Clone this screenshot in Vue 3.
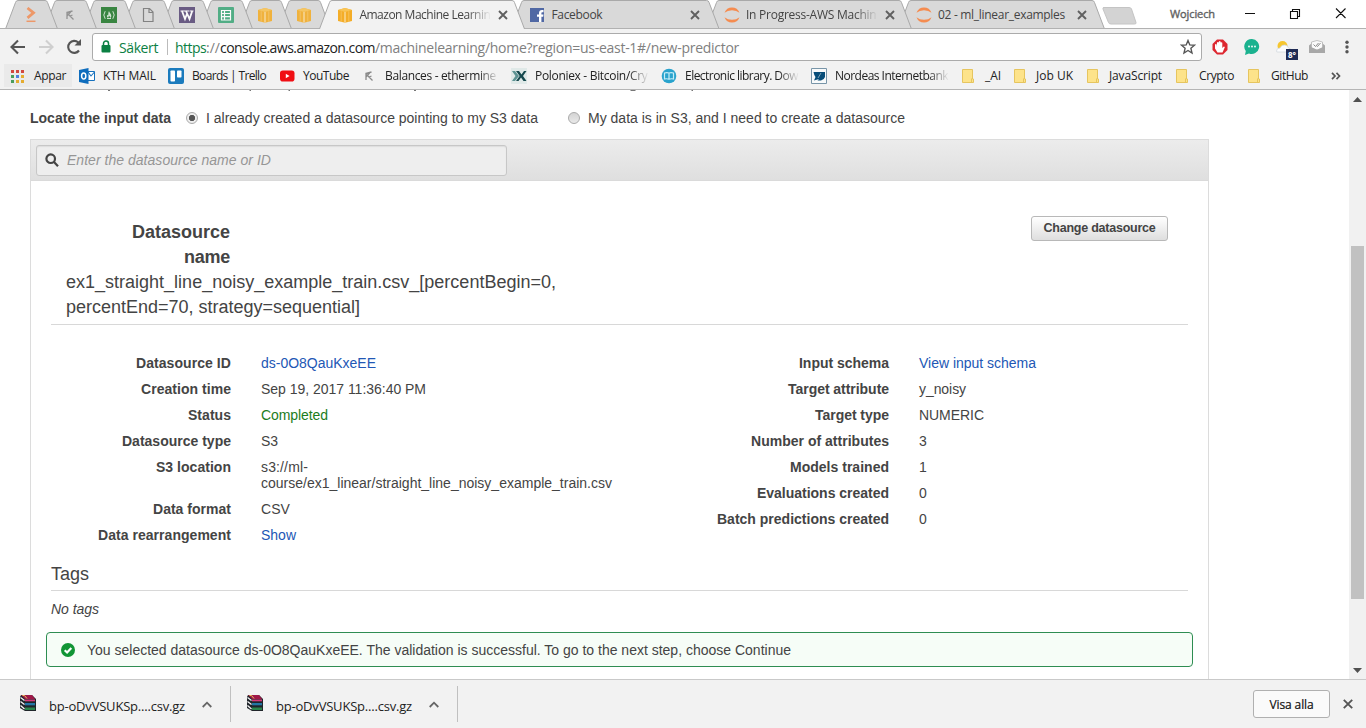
<script setup>
const iconTabs = ['stack', 'miner', 'camp', 'page', 'wiki', 'sheet', 'cube', 'cube']
const wideTabs = [
  { icon: 'cube', text: 'Amazon Machine Learnin', fit: 131, basis: 192, active: true },
  { icon: 'facebook', text: 'Facebook', fit: 51, basis: 194.6 },
  { icon: 'jupyter', text: 'In Progress-AWS Machin', fit: 130.5, basis: 192 },
  { icon: 'jupyter', text: '02 - ml_linear_examples', fit: 127, basis: 193 },
]
const tabs = [
  ...iconTabs.map((icon) => ({ icon, basis: 39.05, dim: true })),
  ...wideTabs,
].map((t, i) => ({ ...t, z: t.active ? 30 : 20 - i, w: t.basis + 14 }))

const tabPath = (w) => `M0.5 29 L10.5 2.5 Q11 0.5 13 0.5 H${w - 13} Q${w - 11} 0.5 ${w - 10.5} 2.5 L${w - 0.5} 29`

const bookmarks = [
  { icon: 'apps', text: 'Appar', fit: 32, w: 69, gap: 8, apps: true },
  { icon: 'outlook', text: 'KTH MAIL', fit: 53, w: 89, gap: 8 },
  { icon: 'trello', text: 'Boards | Trello', fit: 74, w: 111, gap: 8 },
  { icon: 'youtube', text: 'YouTube', fit: 46, w: 82, gap: 8 },
  { icon: 'miner', text: 'Balances - ethermine', fit: 111, w: 150, gap: 8, fade: true },
  { icon: 'poloniex', text: 'Poloniex - Bitcoin/Cry', fit: 112.5, w: 150, gap: 8, fade: true },
  { icon: 'library', text: 'Electronic library. Dow', fit: 113, w: 150, gap: 8, fade: true },
  { icon: 'nordea', text: 'Nordeas Internetbank', fit: 113, w: 149, gap: 8, fade: true },
  { icon: 'folder', text: '_AI', fit: 16, w: 52, gap: 9 },
  { icon: 'folder', text: 'Job UK', fit: 37, w: 73, gap: 8 },
  { icon: 'folder', text: 'JavaScript', fit: 53, w: 89, gap: 8 },
  { icon: 'folder', text: 'Crypto', fit: 35, w: 72, gap: 9 },
  { icon: 'folder', text: 'GitHub', fit: 37, w: 71, gap: 9 },
]

const leftRows = [
  { label: 'Datasource ID', value: ['ds-0O8QauKxeEE'], fit: [115], lf: 95, kind: 'link' },
  { label: 'Creation time', value: ['Sep 19, 2017 11:36:40 PM'], fit: [165], lf: 90 },
  { label: 'Status', value: ['Completed'], fit: [67], lf: 43, kind: 'ok' },
  { label: 'Datasource type', value: ['S3'], fit: [17], lf: 109 },
  { label: 'S3 location', value: ['s3://ml-', 'course/ex1_linear/straight_line_noisy_example_train.csv'], fit: [47, 351], lf: 75 },
  { label: 'Data format', value: ['CSV'], fit: [29], lf: 78 },
  { label: 'Data rearrangement', value: ['Show'], fit: [35], lf: 133, kind: 'link' },
]
const rightRows = [
  { label: 'Input schema', value: ['View input schema'], fit: [117], lf: 90, kind: 'link' },
  { label: 'Target attribute', value: ['y_noisy'], fit: [47], lf: 101 },
  { label: 'Target type', value: ['NUMERIC'], fit: [65], lf: 74 },
  { label: 'Number of attributes', value: ['3'], fit: [8], lf: 138 },
  { label: 'Models trained', value: ['1'], fit: [8], lf: 99 },
  { label: 'Evaluations created', value: ['0'], fit: [8], lf: 132 },
  { label: 'Batch predictions created', value: ['0'], fit: [8], lf: 172 },
]
const columns = [leftRows, rightRows]
const downloads = ['bp-oDvVSUKSp....csv.gz', 'bp-oDvVSUKSp....csv.gz']

/* Tightens or loosens tracking so a label takes exactly the given width. */
const vFit = {
  mounted(el, { value }) {
    const n = el.textContent.length
    const w = el.getBoundingClientRect().width
    if (value && n) el.style.letterSpacing = `${(value - w) / n}px`
  },
}
</script>

<template>
  <div class="window">
    <svg class="defs" width="0" height="0">
      <defs>
        <symbol id="i-stack" viewBox="0 0 16 16"><path d="M4.500 1 10.500 5.800 4.500 10.800" fill="none" stroke="#f0905a" stroke-width="2.800" /><path d="M3.500 14.300h9" stroke="#f0905a" stroke-width="1.500" /></symbol>
        <symbol id="i-miner" viewBox="0 0 16 16"><path d="M5 12V6L11.500 12.500M5 9l4-4.500M5 5.500l5.500-1.500M8 9l2.500-1" fill="none" stroke="#8a8a8a" stroke-width="1.300" /></symbol>
        <symbol id="i-camp" viewBox="0 0 16 16"><rect width="16" height="16" fill="#237a2d" /><path d="M4.200 4.200Q1.400 8 4.200 11.800M11.800 4.200Q14.600 8 11.800 11.800M6 11.500h4" fill="none" stroke="#cfe5d0" stroke-width="1" /><path d="M8 4c.3 2 2.300 2.700 2.300 4.700C10.300 10 9.500 10.800 9 11c.3-1-.3-1.600-.8-2.200C7.800 9.700 7 10 7.300 11 5.800 10.300 5.600 9 6.200 7.800c.3.500.6.700.9.700C7.600 7 7 5.500 8 4Z" fill="#cfe5d0" /></symbol>
        <symbol id="i-page" viewBox="0 0 16 16"><path d="M3.500 1.500h6l3.500 3.500v9.500h-9.500zM9 1.500V5.500h4" fill="none" stroke="#777" stroke-width="1.200" /></symbol>
        <symbol id="i-wiki" viewBox="0 0 16 16"><rect width="16" height="16" fill="#5a4a78" /><path d="M1.500 4h5M6 4h4.500M11 4h3.500" stroke="#fff" stroke-width="1.200" /><path d="M3 4l3 8L8.300 6M7 4l3.500 8L13.200 4" fill="none" stroke="#fff" stroke-width="1.800" /></symbol>
        <symbol id="i-sheet" viewBox="0 0 16 16"><rect width="16" height="16" rx="1" fill="#3fa77a" /><path d="M3.500 3.500h9v9.500h-9zM3.500 6.500h9M3.500 9.700h9M6.500 3.500v9.500" fill="none" stroke="#fff" stroke-width="1.200" /></symbol>
        <symbol id="i-cube" viewBox="0 0 16 16"><path d="M1 3 8 1l7 2v11l-7 1.800L1 14z" fill="#f4ad28" /><path d="M1 3 8 1l7 2-7 2z" fill="#f9c455" /><path d="M4.200 4.200v10.500M11.800 4.200v10.500" stroke="#f7c564" stroke-width=".8" /><path d="M8 5v10.500" stroke="#fbe3b0" stroke-width="1.200" /></symbol>
        <symbol id="i-facebook" viewBox="0 0 16 16"><rect width="14" height="14" x="1" y="1" fill="#5068a4" /><path d="M10 15V9.700h-2V7.500h2V6c0-2 1.200-3 3-3h1.500v2.200h-1c-.9 0-1.100.4-1.100 1.100v1.200h2.100l-.3 2.200h-1.800V15z" fill="#fff" /></symbol>
        <symbol id="i-jupyter" viewBox="0 0 16 16"><path d="M.5 5.800Q2.500.5 8 .5t7.500 5.300Q12.500 3.200 8 3.200T.5 5.800ZM.5 10.200Q2.500 15.500 8 15.500t7.500-5.300Q12.500 12.800 8 12.800T.5 10.200Z" fill="#f58c50" /></symbol>
        <symbol id="i-apps" viewBox="0 0 16 16"><path d="M1 2h3v3H1z" fill="#d2473f" /><path d="M6 2h3v3H6z" fill="#d2473f" /><path d="M11 2h3v3h-3z" fill="#d2473f" /><path d="M1 7h3v3H1z" fill="#4a9d5c" /><path d="M6 7h3v3H6z" fill="#4e7fe0" /><path d="M11 7h3v3h-3z" fill="#e5ac2f" /><path d="M1 12h3v3H1z" fill="#4a9d5c" /><path d="M6 12h3v3H6z" fill="#e5ac2f" /><path d="M11 12h3v3h-3z" fill="#e5ac2f" /></symbol>
        <symbol id="i-outlook" viewBox="0 0 16 16"><path d="M8.500 3.500h7v9h-7z" fill="#fff" stroke="#1671bd" /><path d="m9 4 3 4 3.500-4" fill="none" stroke="#1671bd" stroke-width="1.100" /><path d="M0 2 9.500 0v16L0 14z" fill="#0f6dbd" /><ellipse cx="4.700" cy="8" rx="2.100" ry="3" fill="none" stroke="#fff" stroke-width="1.500" /></symbol>
        <symbol id="i-trello" viewBox="0 0 16 16"><rect width="16" height="16" rx="2" fill="#1b7bbd" /><rect x="2.500" y="2.500" width="4.500" height="11" rx=".8" fill="#fff" /><rect x="9" y="2.500" width="4.500" height="7" rx=".8" fill="#fff" /></symbol>
        <symbol id="i-youtube" viewBox="0 0 16 16"><rect x="1" y="2.500" width="14.500" height="11" rx="2.800" fill="#f00f14" /><path d="M6.800 5.700v4.600L10.600 8z" fill="#fff" /></symbol>
        <symbol id="i-poloniex" viewBox="0 0 16 16"><rect width="16" height="16" fill="#e0e9e8" /><path d="M1 3h3l4 5-4 5H1l3.500-5z" fill="#5d9393" /><path d="M5 3h3l2.500 3.500L13 3h2.500L12 8l3.500 5H12.500L10 9.500 7.500 13H5l3.700-5z" fill="#16494e" /></symbol>
        <symbol id="i-library" viewBox="0 0 16 16"><circle cx="8" cy="8" r="7.300" fill="#29a3cd" /><path d="M3.500 5Q6 4.300 8 5q2-.7 4.500 0v6Q10 10.400 8 11.200 6 10.400 3.500 11zM8 5v6" fill="none" stroke="#c6edf7" stroke-width="1.200" /></symbol>
        <symbol id="i-nordea" viewBox="0 0 16 16"><path d="M.5.5h15v15H.5z" fill="#f8fafb" stroke="#7895a8" /><path d="M2.500 4h11.500v5q-1 3-4 3.500H6.500L8 11 3 12.500 4.500 9Q3 7 2.500 4Z" fill="#084d79" /><path d="m7 10 3-5" stroke="#9bb7c7" stroke-width=".8" /></symbol>
        <symbol id="i-folder" viewBox="0 0 16 16"><path d="M2.500 1.500h10v9.500h1v3.500h-11z" fill="#fde38a" stroke="#e6c55f" /><path d="M11.500 10.500v4" stroke="#e6c55f" /></symbol>
        <symbol id="i-rar" viewBox="0 0 18 18"><path d="M2 1h11l4 4v12H6l-5-3V3z" fill="#20252a" /><path d="M2 1h11l3 4H6z" fill="#a01848" /><path d="M6 5.500h10v1.800H6z" fill="#d6397a" /><path d="m1.500 3.500 4 3M1.500 7.500l4 3M1.500 11.500l4 3.500" stroke="#f4f4f4" stroke-width="1.300" /><path d="M6 9h10v2.300H6z" fill="#2376a5" /><path d="M6 13.500h10V16H6z" fill="#2a854b" /><path d="M3.500 1.500h2l2.500 3" stroke="#e7c654" fill="none" /></symbol>
      </defs>
    </svg>

    <header class="tabstrip">
      <div class="tabs">
        <div
          v-for="(t, i) in tabs"
          :key="i"
          class="tab"
          :class="{ active: t.active, dim: t.dim }"
          :style="{ flexBasis: t.basis + 'px', zIndex: t.z }"
        >
          <svg class="tab-shape" :width="t.w" height="29"><path :d="tabPath(t.w)" /></svg>
          <svg class="tab-icon"><use :href="'#i-' + t.icon" /></svg>
          <template v-if="t.text">
            <div class="tab-title" :class="{ faded: t.fit > 130 }"><span v-fit="t.fit">{{ t.text }}</span></div>
            <svg class="tab-close" viewBox="0 0 10 10"><path d="m1 1 8 8M9 1 1 9" /></svg>
          </template>
        </div>
        <svg class="newtab" width="36" height="18"><path d="M1.500.5H27q2 0 2.500 1.500L34 15.500q.5 1.500-1.500 1.500H9Q7 17 6.500 15.500L1 2Q.5.500 2 .500Z" /></svg>
      </div>
      <span class="user"><span v-fit="45">Wojciech</span></span>
      <svg class="winctl" width="110" height="28"><path d="M10 13.500h10M55.500 11.500h7v7h-7zM57.500 11V9.500h7v7H63M101 8.500l9.500 9.500M110.500 8.500 101 18" /></svg>
    </header>

    <div class="toolbar">
      <svg class="nav" width="92" height="34">
        <path d="M25 19H12M18 12.500 11.500 19l6.500 6.500" class="n1" />
        <path d="M39 19h13M46 12.500l6.500 6.500-6.500 6.500" class="n2" />
        <path d="M79 22.500A6 6 0 1 1 78.300 14.500" class="n1" /><path d="M81 11v6.500h-6.500z" fill="#555" />
      </svg>
      <div class="omnibox">
        <svg class="lock" width="10" height="13" viewBox="0 0 10 13"><rect x=".5" y="5" width="9" height="7.500" rx="1" fill="#0b8043" /><path d="M2.500 5.500V3.500a2.500 2.500 0 0 1 5 0v2" fill="none" stroke="#0b8043" stroke-width="1.500" /></svg>
        <span class="secure"><span v-fit="39">Säkert</span></span>
        <i class="sep"></i>
        <span v-fit="31" class="green">https</span><span v-fit="14" class="grey">://</span><span v-fit="155" class="host">console.aws.amazon.com</span><span v-fit="364" class="grey">/machinelearning/home?region=us-east-1#/new-predictor</span>
        <svg class="star" width="16" height="16" viewBox="0 0 16 16"><path d="m8 1.500 1.800 4.400 4.700.3-3.600 3.100 1.100 4.700-4-2.500L4 14l1.100-4.700L1.500 6.200l4.700-.3z" fill="none" stroke="#555" stroke-width="1.400" /></svg>
      </div>
      <div class="ext">
        <svg width="16" height="16" viewBox="0 0 16 16"><path d="M5 .5h6L15.500 5v6L11 15.500H5L.5 11V5z" fill="#dd2730" /><path d="M5.500 13.500 3 9.500V5.500q.8-1 1.500 0V8L5 3.500q.8-1 1.500 0L7 2.500q.8-.8 1.500 0l.3 1q1-.8 1.500.3V9l1.500-1.500q1 0 1 .7L10.500 13.500z" fill="#fff" /></svg>
        <svg width="16" height="16" viewBox="0 0 16 16"><path d="M8 0a7.500 7.500 0 1 1-3 14.500L1 16l.8-4A7.500 7.500 0 0 1 8 0Z" fill="#1bb28f" /><circle cx="5" cy="7.500" r=".9" fill="#fff" /><circle cx="8" cy="7.500" r=".9" fill="#fff" /><circle cx="11" cy="7.500" r=".9" fill="#fff" /></svg>
        <span class="weather">
          <svg width="18" height="16" viewBox="0 0 18 16"><circle cx="6.500" cy="7" r="5" fill="#f6c62f" /><path d="M.5 12q0-3 3.500-3Q5.500 5.500 9 6q3 .5 3.500 3 3.500.5 3.500 4H2Q.5 13.500.5 12Z" fill="#fbfcfd" stroke="#d3d9dd" stroke-width=".8" /></svg>
          <b>8°</b>
        </span>
        <svg width="18" height="16" viewBox="0 0 18 16"><path d="M1 6.500 4 4h10l3 2.500V14H1z" fill="#a8a8a8" /><path d="M3.500 3Q9 0 14.500 3v6L9 11 3.500 9z" fill="#fafafa" stroke="#b5b5b5" stroke-width=".8" /><path d="m5.500 5.500 2 2L10.500 4M8.700 7l.8.500 3-3.500" fill="none" stroke="#8c8c8c" /><path d="M1 7 9 11l8-4v7H1z" fill="#a8a8a8" /></svg>
        <svg width="4" height="16" viewBox="0 0 4 16" class="kebab"><circle cx="2" cy="3.200" r="1.700" /><circle cx="2" cy="8" r="1.700" /><circle cx="2" cy="12.800" r="1.700" /></svg>
      </div>
    </div>

    <nav class="bookmarks">
      <div v-for="b in bookmarks" :key="b.text" class="bm" :class="{ apps: b.apps }" :style="{ flexBasis: b.w + 'px', columnGap: b.gap + 'px' }">
        <svg class="bm-icon"><use :href="'#i-' + b.icon" /></svg>
        <div class="bm-text" :class="{ faded: b.fade }"><span v-fit="b.fit">{{ b.text }}</span></div>
      </div>
      <svg class="more" width="10" height="8" viewBox="0 0 10 8"><path d="m1 .8 3 3.200-3 3.200M5.500.8l3 3.200-3 3.200" /></svg>
    </nav>

    <section class="page">
      <main class="content">
        <svg class="cutoff" width="1200" height="2"><path d="M108 .5h2M249.500.5h1.500M288.500.5h1.500M414 .5h2M630.500.5h5M691.500.5h1.500" /></svg>
        <div class="locate">
          <b v-fit="141" class="fit">Locate the input data</b>
          <span class="radio on"></span>
          <span v-fit="332" class="fit">I already created a datasource pointing to my S3 data</span>
          <span class="radio off"></span>
          <span v-fit="317" class="fit">My data is in S3, and I need to create a datasource</span>
        </div>

        <div class="panel">
          <div class="panel-head">
            <div class="search">
              <svg width="14" height="14" viewBox="0 0 14 14"><circle cx="5.700" cy="5.700" r="4.300" /><path d="m9 9 4 4.200" /></svg>
              <i v-fit="204" class="fit">Enter the datasource name or ID</i>
            </div>
          </div>

          <div class="panel-body">
            <div class="name-row">
              <div class="name">
                <b><span v-fit="98" class="fit">Datasource</span><br /><span v-fit="46" class="fit">name</span></b>
                <p><span v-fit="490" class="fit">ex1_straight_line_noisy_example_train.csv_[percentBegin=0,</span><br /><span v-fit="294" class="fit">percentEnd=70, strategy=sequential]</span></p>
              </div>
              <button class="change"><span v-fit="112" class="fit">Change datasource</span></button>
            </div>

            <div class="details">
              <dl v-for="(rows, c) in columns" :key="c">
                <div v-for="r in rows" :key="r.label" class="row">
                  <dt><span v-fit="r.lf" class="fit">{{ r.label }}</span></dt>
                  <dd :class="r.kind">
                    <div v-for="(line, k) in r.value" :key="k"><span v-fit="r.fit[k]" class="fit">{{ line }}</span></div>
                  </dd>
                </div>
              </dl>
            </div>

            <h2><span v-fit="38" class="fit">Tags</span></h2>
            <p class="no-tags"><span v-fit="48" class="fit">No tags</span></p>

            <div class="alert">
              <svg width="14" height="14" viewBox="0 0 14 14"><circle cx="7" cy="7" r="7" fill="#119535" /><path d="m3.700 7.200 2.400 2.300L10.300 5" fill="none" stroke="#fff" stroke-width="2.200" /></svg>
              <span v-fit="704" class="fit">You selected datasource ds-0O8QauKxeEE. The validation is successful. To go to the next step, choose Continue</span>
            </div>
          </div>
        </div>
      </main>
      <aside class="scrollbar">
        <svg width="9" height="5"><path d="M0 5 4.500 0 9 5z" /></svg>
        <div class="thumb"></div>
        <svg width="9" height="5"><path d="M0 0 4.500 5 9 0z" /></svg>
      </aside>
    </section>

    <footer class="shelf">
      <div v-for="(d, i) in downloads" :key="i" class="dl">
        <svg class="rar"><use href="#i-rar" /></svg>
        <span class="dl-name"><span v-fit="136">{{ d }}</span></span>
        <svg width="10" height="7" viewBox="0 0 10 7"><path d="M.7 6 5 1.700 9.300 6" fill="none" stroke="#666" stroke-width="1.800" /></svg>
      </div>
      <button class="show-all"><span v-fit="44">Visa alla</span></button>
      <svg class="shelf-close" width="10" height="10" viewBox="0 0 10 10"><path d="m.8.8 8.400 8.400M9.200.8.8 9.200" /></svg>
    </footer>
  </div>
</template>

<style>
body { margin: 0; overflow: hidden; }
</style>

<style scoped>
* { box-sizing: border-box; }
.window { width: 1366px; height: 728px; overflow: hidden; background: #fff; display: flex; flex-direction: column; font-family: "Open Sans", "Noto Sans", sans-serif; font-size: 12px; color: #222; }
.defs { position: absolute; }
span { white-space: nowrap; }
svg { flex: none; display: block; }
.tabstrip span, .toolbar span, .bookmarks span, .shelf span, .fit { display: inline-block; }

.tabstrip { height: 29px; flex: none; display: flex; border-bottom: 1px solid #b1b1b1; background: #fff; }
.tabs { display: flex; flex: 0 0 1152px; padding-left: 5px; height: 28px; }
.tab { flex: 0 0 auto; height: 28px; position: relative; display: flex; align-items: center; padding-left: 18px; isolation: isolate; }
.tab-shape { position: absolute; left: 0; top: 0; z-index: -1; }
.tab-shape path { fill: #d9d9d9; stroke: #a9a9a9; stroke-width: 1; }
.tab:not(.active) .tab-shape { height: 28px; }
.tab.active { margin-left: 2px; }
.active .tab-shape path { fill: #f2f2f2; }
.tab-icon { width: 16px; height: 16px; margin-top: 1px; }
.dim .tab-icon { opacity: .88; }
.tab-title { margin-left: 6px; width: 132px; color: #444; }
.faded { mask-image: linear-gradient(90deg, #000 82%, transparent 100%); }
.tab-close { width: 10px; height: 10px; margin-left: 7px; margin-top: 1px; }
.tab-close path { stroke: #606060; stroke-width: 1.900; }
.newtab { margin: 7px 0 0 11px; }
.newtab path { fill: #d3d3d3; stroke: #c4c4c4; }
.user { padding: 6px 0 0 18px; color: #777; font-size: 11px; -webkit-text-stroke: .4px #555; flex: 0 0 83px; }
.winctl path { fill: none; stroke: #111; stroke-width: 1.100; }
.winctl { overflow: visible; }

.toolbar { height: 33px; flex: none; background: #f2f2f2; display: flex; align-items: flex-start; }
.nav { margin-top: -1px; }
.n1, .n2 { fill: none; stroke: #555; stroke-width: 2.100; }
.n2 { stroke: #cfcfcf; }
.omnibox { width: 1110px; height: 28px; margin-top: 4px; border: 1px solid #ababab; border-radius: 3px; background: #fff; display: flex; align-items: center; font-size: 14px; }
.lock { margin-left: 8px; margin-top: -1px; }
.secure { margin-left: 8px; width: 48px; color: #0b8043; }
.sep { width: 1px; height: 16px; background: #bbb; margin-right: 7px; }
.green { color: #0b8043; }
.grey { color: #808080; }
.host { color: #222; }
.star { margin-left: auto; margin-right: 5px; }
.ext { display: flex; margin: 10px 0 0 10px; gap: 16px; }
.weather { position: relative; width: 16px; }
.weather b { position: absolute; left: 10px; top: 10px; width: 12px; height: 11px; background: #202c55; color: #fff; font-size: 8px; line-height: 11px; text-align: center; }
.kebab { margin-left: 3px; fill: #555; }

.bookmarks { height: 28px; flex: none; background: #f2f2f2; border-bottom: 1px solid #b5b5b5; display: flex; align-items: center; padding-left: 10px; }
.bm { flex: 0 0 auto; min-width: 0; display: flex; align-items: center; }
.apps { height: 23px; background: #eaeaea; box-shadow: -6px 0 #eaeaea; clip-path: inset(0 7px 0 -6px); }
.bm-icon { width: 16px; height: 16px; }
.bm-text { flex: 0 0 auto; }
.bm-text.faded { width: 114px; }
.more path { fill: none; stroke: #555; stroke-width: 1.700; }
.more { margin-left: 14px; }

.page { flex: 0 0 589px; height: 589px; display: flex; font-family: "Liberation Sans", Arial, sans-serif; font-size: 14px; color: #444; overflow: hidden; }
.content { width: 1349px; padding-left: 30px; }
.cutoff { margin-left: -30px; }
.cutoff path { stroke: #777; stroke-width: 1; }
.locate { height: 47px; padding-top: 5px; display: flex; align-items: center; }
.radio { width: 12px; height: 12px; border-radius: 50%; border: 1px solid #aaa; background: linear-gradient(#ddd, #f0f0f0); margin: 0 8px 0 15px; flex: none; }
.radio.on { background: radial-gradient(circle, #555 0 2.800px, #eee 3.500px); }
.radio.off { margin-left: 30px; background: linear-gradient(#d4d4d4, #e9e9e9); }
.panel { width: 1179px; height: 560px; border: 1px solid #dcdcdc; }
.panel-head { height: 41px; padding: 5px; background: linear-gradient(#ececec, #dfdfdf); border-bottom: 1px solid #dadada; }
.search { width: 471px; height: 31px; border: 1px solid #c7c7c7; border-radius: 3px; background: #eee; box-shadow: inset 0 1px 1px #ddd; display: flex; align-items: center; gap: 8px; padding: 0 0 1px 8px; color: #969696; }
.search svg { fill: none; stroke: #444; stroke-width: 2.200; }
.panel-body { padding: 38px 20px 0; }
.name-row { display: flex; justify-content: space-between; height: 106px; border-bottom: 1px solid #d8d8d8; padding-right: 20px; }
.name { font-size: 18px; line-height: 25px; padding-top: 1px; }
.name b { display: block; width: 179px; text-align: right; }
.name p { margin: 0 0 0 15px; }
button { font-family: inherit; cursor: pointer; }
.change { width: 137px; height: 25px; margin-top: -3px; border: 1px solid #b8b8b8; border-radius: 3px; background: linear-gradient(#fff, #dedede); color: #444; font-weight: 700; font-size: 12.500px; padding: 0 0 2px; }
.details { display: grid; grid-template-columns: 658px 1fr; margin-top: 26px; line-height: 16px; }
dl { margin: 0; }
.row { display: grid; grid-template-columns: 180px 1fr; column-gap: 30px; padding: 4px 0 6px; }
dt { font-weight: 700; text-align: right; white-space: nowrap; }
dd { margin: 0; }
.fit { white-space: nowrap; }
dt .fit, dd .fit { vertical-align: top; }
.link { color: #2257b5; }
.ok { color: #1c7d1c; }
h2 { margin: 11px 0 0; height: 31px; font-size: 18px; line-height: 28px; font-weight: 400; border-bottom: 1px solid #d8d8d8; }
.no-tags { margin: 10px 0 0; font-style: italic; line-height: 16px; }
.alert { width: 1147px; height: 35px; margin: 15px 0 0 -5px; border: 1px solid #2e8d52; border-radius: 4px; background: #f6fdf7; display: flex; align-items: center; gap: 12px; padding-left: 14px; }
.scrollbar { width: 17px; background: #f1f1f1; display: flex; flex-direction: column; align-items: center; padding: 7px 0 6px; }
.scrollbar svg { fill: #505050; }
.thumb { width: 13px; height: 353px; margin: 144px 0 auto; background: #c1c1c1; }

.shelf { flex: 0 0 49px; background: #f2f2f2; border-top: 1px solid #c9c9c9; display: flex; align-items: center; padding-left: 4px; }
.dl { flex: 0 0 227px; height: 36px; border-right: 1px solid #c0c0c0; display: flex; align-items: center; padding: 0 0 0 15px; }
.rar { width: 18px; height: 18px; margin-top: -3px; }
.dl-name { flex: 0 0 165px; padding-left: 12px; font-size: 13px; margin-top: 3px; }
.show-all { width: 77px; height: 28px; margin-left: 795px; border: 1px solid #b0b0b0; border-radius: 3px; background: #fafafa; color: #111; font-size: 12px; padding: 0; -webkit-text-stroke: .2px #111; }
.shelf-close { margin-left: 13px; }
.shelf-close path { stroke: #555; stroke-width: 1.900; }
</style>
